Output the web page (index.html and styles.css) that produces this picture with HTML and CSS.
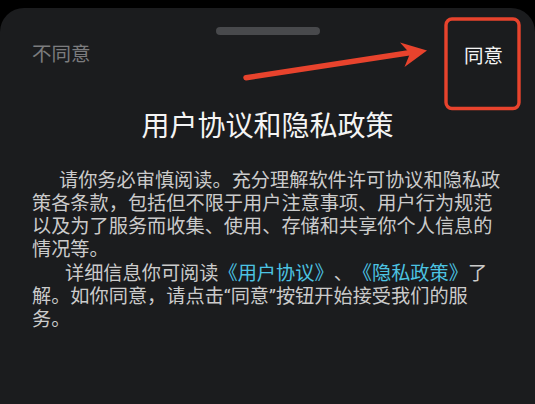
FILE: index.html
```html
<!DOCTYPE html>
<html lang="zh-CN">
<head>
  <meta charset="UTF-8">
  <meta name="viewport" content="width=device-width, initial-scale=1.0">
  <title>用户协议和隐私政策</title>
  <link rel="stylesheet" href="styles.css">
</head>
<body>
  <div class="sheet">
    <div class="handle"></div>

    <!-- Actions -->
    <div class="sheet-header">
      <span class="btn-disagree">不同意</span>
      <span class="btn-agree">同意</span>
    </div>

    <h1 class="title">用户协议和隐私政策</h1>

    <div class="content">
      <p class="para para-first">请你务必审慎阅读。充分理解软件许可协议和隐私政策各条款，包括但不限于用户注意事项、用户行为规范以及为了服务而收集、使用、存储和共享你个人信息的情况等。</p>
      <p class="para para-second">详细信息你可阅读<a class="link">《用户协议》</a>、<a class="link">《隐私政策》</a>了解。如你同意，请点击“同意”按钮开始接受我们的服务。</p>
    </div>
  </div>

  <!-- Annotation overlay -->
  <svg class="annotation" width="535" height="120" viewBox="0 0 535 120">
    <rect x="446" y="19" width="73" height="89.5" rx="6" fill="none" stroke="#e8432d" stroke-width="3.4"/>
    <line x1="246" y1="77.7" x2="411" y2="52.5" stroke="#e8432d" stroke-width="5.5" stroke-linecap="round"/>
    <polygon points="400,42.5 427,50.5 404.5,67 410,53.5" fill="#e8432d"/>
  </svg>
</body>
</html>
```

FILE: styles.css
```css
html, body { margin: 0; padding: 0; }
body { background: #000; font-family: Roboto, "Noto Sans CJK SC", sans-serif; overflow: hidden; position: relative; width: 535px; height: 404px; text-spacing-trim: space-all; }

.sheet { margin-top: 8px; height: 396px; background: #1b1c1e; border-radius: 24px 24px 0 0; padding-top: 19px; box-sizing: border-box; }
.handle { width: 104px; height: 8px; margin: 0 auto; background: #48494c; border-radius: 4px; }

.sheet-header { display: flex; justify-content: space-between; align-items: flex-start; margin-top: 9px; padding: 0 32px; }
.btn-disagree { font-size: 19.5px; line-height: 22px; color: #7c7c7e; }
.btn-agree { font-size: 19.5px; line-height: 22px; padding-top: 2px; color: #f4f4f4; }

.title { margin: 41px 0 0; text-align: center; font-size: 28px; line-height: 36px; font-weight: normal; color: #f4f4f4; }

.content { margin-top: 24px; padding: 0 29px 0 32px; }
.para { margin: 0; font-size: 19.2px; line-height: 23px; color: #cbcbcb; }
.para-first { text-indent: 27px; }
.para-second { text-indent: 33px; margin-top: 1px; }
.link { color: #4cc3e2; text-decoration: none; }

.annotation { position: absolute; top: 0; left: 0; }
```
